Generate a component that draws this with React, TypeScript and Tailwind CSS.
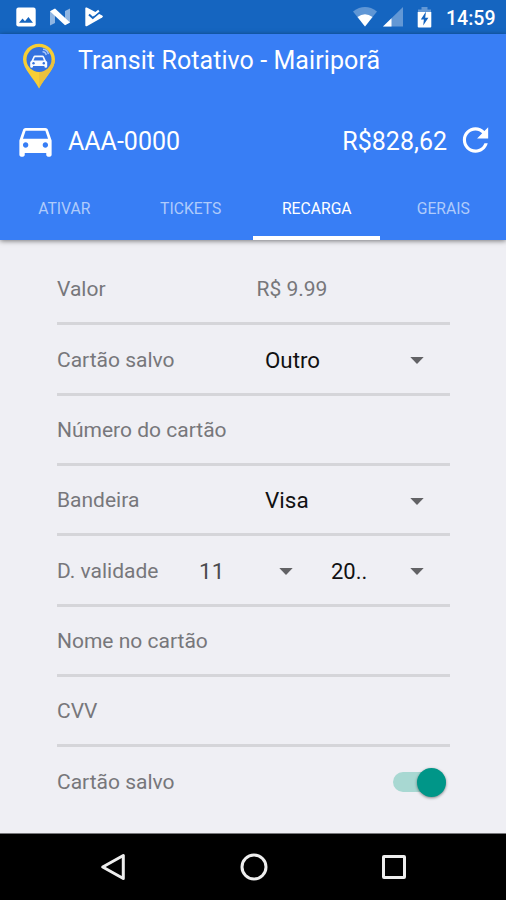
import type { ReactNode } from "react";

function Caret({ className = "" }: { className?: string }) {
  return (
    <svg className={`h-[7px] w-[14px] shrink-0 ${className}`} viewBox="0 0 14 7">
      <path d="M0.3 0h13.4L7 7z" fill="#626265" />
    </svg>
  );
}

function Row({ children }: { children?: ReactNode }) {
  return (
    <div className="flex h-[70.33px] items-center border-b-[3px] border-[#d5d5d9] pt-[3px] text-[21px] text-[#77777b]">
      {children}
    </div>
  );
}

function StatusBar() {
  return (
    <div className="flex h-[34px] shrink-0 items-center bg-[#1565c0] pl-[16px] pr-[11px] text-white">
      <svg className="h-[20px] w-[20px]" viewBox="0 0 20 20">
        <rect x="0.3" y="0.5" width="19.4" height="19" rx="2.2" fill="#fff" />
        <path d="M3 15.8 6.5 11.4 9 14.2 12.4 10 17 15.8z" fill="#1565c0" />
      </svg>
      <svg className="ml-[13px] h-[20px] w-[22px]" viewBox="0 0 22 20">
        <path d="M1 4.5 6 2v14L1 18.5z M16 4l5-2.5v14L16 18z" fill="#8fb5e2" />
        <path d="M1 4.2 6 1.5 21 15.5 16 18.3z" fill="#fff" />
      </svg>
      <svg className="ml-[13px] h-[20px] w-[20px]" viewBox="0 0 20 20">
        <path d="M1.3 1Q1.5 0 2.8 0.6L18.2 8.4Q19.8 9.3 18.2 10.6L2.8 19.2Q1.3 19.7 1.3 18.3z" fill="#fff" />
        <path d="M5 7.5 8.8 11 18 3.2" fill="none" stroke="#1565c0" strokeWidth="2" />
        <path d="M10.4 5.8 14.2 2.8 15.5 4.5 10 9z" fill="#fff" />
      </svg>
      <svg className="ml-auto h-[20px] w-[24px]" viewBox="0 0 24 20">
        <path d="M0 4.5Q12-4.3 24 4.5L12 19.5z" fill="#5f96d5" />
        <path d="M4.5 10Q12 4.7 19.5 10L12 19.5z" fill="#fff" />
      </svg>
      <svg className="ml-[6px] h-[20px] w-[20px]" viewBox="0 0 20 20">
        <path d="M20 0v19.5H0z" fill="#6398d5" />
        <path d="M8.5 11.2v8.3H0z" fill="#fff" />
      </svg>
      <svg className="ml-[14px] h-[21px] w-[15px]" viewBox="0 0 15 21">
        <path d="M4.5 0h6v2.4H14V6H1V2.4h3.5z" fill="#6398d5" />
        <path d="M0.7 5h13.6v14.5q0 1-1 1H1.7q-1 0-1-1z" fill="#fff" />
        <path d="M9 4.5 3.8 12.5h3.1L6.2 18.5 11.4 10.7H8.2z" fill="#1565c0" />
      </svg>
      <span className="ml-[14px] mt-[4px] w-[49px] whitespace-nowrap text-[19.5px] font-medium leading-none">14:59</span>
    </div>
  );
}

function Pin() {
  return (
    <svg className="h-[46px] w-[34px] shrink-0" viewBox="0 0 34 46">
      <path d="M17 .7C8 .7 1 7.7 1 16.5 1 26 12 35.5 17 45.5 22 35.5 33 26 33 16.5 33 7.7 26 .7 17 .7z" fill="#f7ce35" />
      <path d="M17 27v18.5C22 35.5 33 26 33 16.5L29 18q-3 8-12 9z" fill="#eac13d" />
      <circle cx="17" cy="16.5" r="12.5" fill="#3472df" />
      <path d="M11.3 13.7q.5-1.2 1.7-1.2h7.4q1.2 0 1.7 1.2l1.7 3.9 1.4 1.3v4.7q0 1.2-1.4 1.2t-1.4-1.2v-.6H11v.6q0 1.2-1.4 1.2t-1.4-1.2v-4.7l1.4-1.3z" fill="#f8fbff" />
      <path d="M12.8 14.2h7.8l1.3 3.2H11.5z" fill="#3472df" />
      <circle cx="11.5" cy="20.3" r="1.2" fill="#3472df" />
      <circle cx="21.8" cy="20.3" r="1.2" fill="#3472df" />
      <path d="M20.5 8.8q3.2 0 3.7 3.4M21 6.2q4.6.3 5.4 5" fill="none" stroke="#a9c8fb" strokeWidth="1.4" />
    </svg>
  );
}

function Header() {
  return (
    <header className="z-10 flex h-[206px] shrink-0 flex-col bg-[#387ef5] text-white shadow-[0_1px_5px_rgba(0,0,0,0.5)]">
      <div className="flex h-[66px] pl-[22px] pt-[9px]">
        <Pin />
        <h1 className="ml-[22px] mt-[2px] whitespace-nowrap text-[25px] leading-[32px] tracking-[0.08px]">Transit Rotativo - Mairiporã</h1>
      </div>
      <div className="flex h-[82px] items-center pl-[14px] pr-[11px] text-[25px]">
        <svg className="-mt-[2px] h-[43px] w-[43px]" viewBox="0 0 24 24" fill="currentColor">
          <path d="M18.92 6.01C18.72 5.42 18.16 5 17.5 5h-11c-.66 0-1.21.42-1.42 1.01L3 12v8c0 .55.45 1 1 1h1c.55 0 1-.45 1-1v-1h12v1c0 .55.45 1 1 1h1c.55 0 1-.45 1-1v-8l-2.08-5.99zM6.5 16c-.83 0-1.5-.67-1.5-1.5S5.67 13 6.5 13s1.5.67 1.5 1.5S7.33 16 6.5 16zm11 0c-.83 0-1.5-.67-1.5-1.5s.67-1.5 1.5-1.5 1.5.67 1.5 1.5-.67 1.5-1.5 1.5zM5 11l1.5-4.5h11L19 11H5z" />
        </svg>
        <span className="ml-[11px] mt-[2px]">AAA-0000</span>
        <span className="ml-auto mt-[2px]">R$828,62</span>
        <svg className="-mt-[2px] ml-[9px] h-[38px] w-[39px]" viewBox="0 0 24 24" fill="currentColor">
          <path d="M17.65 6.35C16.2 4.9 14.21 4 12 4c-4.42 0-7.99 3.58-7.99 8s3.57 8 7.99 8c3.73 0 6.84-2.55 7.73-6h-2.08c-.82 2.33-3.04 4-5.65 4-3.31 0-6-2.69-6-6s2.69-6 6-6c1.66 0 3.14.69 4.22 1.78L13 11h7V4l-2.35 2.35z" />
        </svg>
      </div>
      <nav className="grid h-[58px] grid-cols-4 text-center text-[15.7px] leading-[54px] text-[#afcbfb]">
        <span className="pl-[2px]">ATIVAR</span>
        <span className="pl-[2px]">TICKETS</span>
        <span className="border-b-[4px] border-white pl-[1px] text-white">RECARGA</span>
        <span className="pl-[1px]">GERAIS</span>
      </nav>
    </header>
  );
}

export default function App() {
  return (
    <div className="flex h-[900px] w-[506px] flex-col overflow-hidden bg-[#efeff4] font-['Roboto',sans-serif]">
      <StatusBar />
      <Header />
      <main className="flex-1 pl-[57px] pr-[56px] pt-[15px]">
        <Row>
          <span className="w-[199.5px]">Valor</span>
          <span>R$ 9.99</span>
        </Row>
        <Row>
          <span className="w-[208px]">Cartão salvo</span>
          <span className="text-[22.3px] text-[#111112]">Outro</span>
          <Caret className="ml-auto mr-[26px]" />
        </Row>
        <Row>Número do cartão</Row>
        <Row>
          <span className="w-[208px]">Bandeira</span>
          <span className="text-[22.5px] text-[#111112]">Visa</span>
          <Caret className="ml-auto mr-[26px]" />
        </Row>
        <Row>
          <span className="w-[142px]">D. validade</span>
          <span className="w-[80px] text-[22.5px] text-[#4b4b4e]">11</span>
          <Caret />
          <span className="ml-[38px] text-[22px] text-[#111112]">20..</span>
          <Caret className="ml-auto mr-[26px]" />
        </Row>
        <Row>Nome no cartão</Row>
        <Row>CVV</Row>
        <div className="flex h-[70px] items-center pr-[4px] text-[21px] text-[#77777b]">
          <span className="pt-[1px]">Cartão salvo</span>
          <div className="ml-auto flex h-[20px] w-[53px] items-center justify-end rounded-full bg-[#a8d8d2]">
            <div className="h-[29px] w-[29px] shrink-0 rounded-full bg-[#009688] shadow-[0_1px_3px_rgba(0,0,0,0.45)]" />
          </div>
        </div>
      </main>
      <footer className="flex h-[67px] shrink-0 items-center justify-between border-t border-[#77777a] bg-black pl-[100px] pr-[99px]">
        <svg className="h-[28px] w-[26px]" viewBox="0 0 26 28">
          <path d="M2.7 14 23.3 2.5v23z" fill="none" stroke="#eee" strokeWidth="3" strokeLinejoin="round" />
        </svg>
        <svg className="h-[28px] w-[28px]" viewBox="0 0 28 28">
          <circle cx="14" cy="14" r="12" fill="none" stroke="#eee" strokeWidth="3" />
        </svg>
        <svg className="h-[26px] w-[26px]" viewBox="0 0 26 26">
          <rect x="2.5" y="2.5" width="21" height="21" rx="0.5" fill="none" stroke="#eee" strokeWidth="3" />
        </svg>
      </footer>
    </div>
  );
}
